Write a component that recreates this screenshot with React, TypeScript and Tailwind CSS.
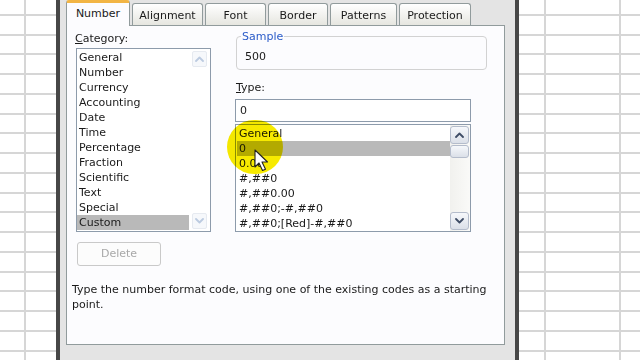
import React from "react";

const Chevron = ({ up, color }: { up?: boolean; color: string }) => (
  <svg width="9" height="6" viewBox="0 0 9 6">
    <path
      d={up ? "M1 5 L4.5 1.5 L8 5" : "M1 1 L4.5 4.5 L8 1"}
      fill="none"
      stroke={color}
      strokeWidth="1.8"
      strokeLinecap="round"
      strokeLinejoin="round"
    />
  </svg>
);

function LeftGrid() {
  return (
    <div className="flex flex-col -mt-[4px]">
      {Array.from({ length: 19 }).map((_, i) => (
        <div key={i} className="flex h-[19.75px] shrink-0 border-b-2 border-[#d6d6d6]">
          <div className="w-[26px] border-r-2 border-[#d6d6d6]" />
          <div className="flex-1" />
        </div>
      ))}
    </div>
  );
}

function RightGrid() {
  return (
    <div className="flex flex-col -mt-[4px]">
      {Array.from({ length: 19 }).map((_, i) => (
        <div key={i} className="flex h-[19.75px] shrink-0 border-b-2 border-[#d6d6d6]">
          <div className="w-[27px] border-r-2 border-[#d6d6d6]" />
          <div className="w-[75px] border-r-2 border-[#d6d6d6]" />
          <div className="flex-1" />
        </div>
      ))}
    </div>
  );
}

const categories = [
  "General",
  "Number",
  "Currency",
  "Accounting",
  "Date",
  "Time",
  "Percentage",
  "Fraction",
  "Scientific",
  "Text",
  "Special",
  "Custom",
];

const types = [
  "General",
  "0",
  "0.00",
  "#,##0",
  "#,##0.00",
  "#,##0;-#,##0",
  "#,##0;[Red]-#,##0",
];

function Tab({ label, w, active }: { label: string; w: string; active?: boolean }) {
  if (active) {
    return (
      <div
        className={`${w} relative z-10 self-start h-[26px] -mb-px bg-[#fcfcfe] border-x border-[#919b9c] border-t-[3px] border-t-[#f2b544] rounded-t-[3px] flex justify-center pt-[3px] leading-[15px]`}
      >
        {label}
      </div>
    );
  }
  return (
    <div
      className={`${w} ml-[2px] h-[22px] border border-b-0 border-[#919b9c] rounded-t-[3px] bg-linear-to-b from-white to-[#e6e6e0] flex justify-center pt-[4px] leading-[15px]`}
    >
      {label}
    </div>
  );
}

const btn =
  "w-full flex items-center justify-center rounded-[3px] border border-[#b4bccb] bg-linear-to-b from-[#f6f8fb] to-[#dbe0e8]";

export default function App() {
  return (
    <div className="relative w-[640px] h-[360px] overflow-hidden flex bg-white text-[11px] text-[#1a1a1a] font-['DejaVu_Sans',Verdana,sans-serif]">
      <div className="w-[56px] overflow-hidden">
        <LeftGrid />
      </div>
      <div className="w-[4px] bg-[#474747]" />
      <div className="w-[455px] bg-[#e4e4e4] pl-[6px] flex flex-col">
        <div className="h-[25px] flex items-end">
          <Tab label="Number" w="w-[64px]" active />
          <Tab label="Alignment" w="w-[71px]" />
          <Tab label="Font" w="w-[61px]" />
          <Tab label="Border" w="w-[60px]" />
          <Tab label="Patterns" w="w-[67px]" />
          <Tab label="Protection" w="w-[72px]" />
        </div>
        <div className="w-[439px] h-[320px] border border-[#919b9c] bg-[#fcfcfe] flex flex-col pl-[5px] pt-[4px]">
          <div className="flex">
            <div className="ml-[3px] w-[136px] flex flex-col pt-px">
              <div className="h-[15px] leading-[15px]">
                <span className="underline">C</span>ategory:
              </div>
              <div className="mt-[2px] ml-px w-[135px] h-[184px] border border-[#8d9bab] bg-white flex">
                <div className="w-[112px] pt-px">
                  {categories.map((c) => (
                    <div
                      key={c}
                      className={`h-[15px] leading-[15px] pl-[2px] ${c === "Custom" ? "bg-[#b9b9b9]" : ""}`}
                    >
                      {c}
                    </div>
                  ))}
                </div>
                <div className="flex-1 flex flex-col px-[3px] py-[2px]">
                  <div className="h-[16px] w-full flex items-center justify-center rounded-[2px] border border-[#e6eaf0] bg-[#f6f8fb]">
                    <Chevron up color="#bccbe0" />
                  </div>
                  <div className="flex-1" />
                  <div className="h-[16px] w-full flex items-center justify-center rounded-[2px] border border-[#e6eaf0] bg-[#f6f8fb]">
                    <Chevron color="#bccbe0" />
                  </div>
                </div>
              </div>
            </div>
            <div className="ml-[24px] w-[252px] flex flex-col">
              <fieldset className="ml-px w-[251px] border border-[#d2d2d2] rounded-[4px] px-[8px] pb-[5px]">
                <legend className="-ml-[4px] px-[1px] leading-[13px] text-[#2a5bc8]">Sample</legend>
                <div className="pt-[6px] leading-[15px]">500</div>
              </fieldset>
              <div className="mt-[10px] ml-px h-[15px] leading-[15px]">
                <span className="underline">T</span>ype:
              </div>
              <div className="mt-[4px] w-[236px] h-[23px] border border-[#8d9bab] bg-white pl-[4px] leading-[21px]">
                0
              </div>
              <div className="mt-[2px] w-[236px] h-[108px] border border-[#8d9bab] bg-white flex">
                <div className="flex-1 pl-px pt-px">
                  {types.map((t) => (
                    <div
                      key={t}
                      className={`h-[15px] leading-[15px] pl-[2px] ${t === "0" ? "bg-[#b9b9b9]" : ""}`}
                    >
                      {t}
                    </div>
                  ))}
                </div>
                <div className="w-[20px] flex flex-col py-px pr-px bg-linear-to-r from-[#f1f1ee] to-[#fafaf8]">
                  <div className={`${btn} h-[18px]`}>
                    <Chevron up color="#3f4d66" />
                  </div>
                  <div className={`${btn} h-[13px] mt-px`} />
                  <div className="flex-1" />
                  <div className={`${btn} h-[18px]`}>
                    <Chevron color="#3f4d66" />
                  </div>
                </div>
              </div>
            </div>
          </div>
          <div className="mt-[10px] ml-[5px] w-[84px] h-[24px] border border-[#c9c9c9] rounded-[3px] bg-[#fcfcfc] flex items-center justify-center text-[#a8a8a8]">
            Delete
          </div>
          <div className="mt-[16px] w-[430px] leading-[15px]">
            Type the number format code, using one of the existing codes as a starting point.
          </div>
        </div>
      </div>
      <div className="w-[4px] bg-[#474747]" />
      <div className="flex-1 overflow-hidden">
        <RightGrid />
      </div>

      <div className="absolute left-[227px] top-[120px] w-[56px] h-[54px] rounded-full mix-blend-multiply bg-[radial-gradient(circle,#f7ea00_0%,#f7ea00_78%,rgba(247,234,0,0)_100%)]" />
      <svg className="absolute left-[254px] top-[149px]" width="16" height="24" viewBox="0 0 16 24">
        <path
          d="M1 1 L1 18 L5 14 L8.5 21.5 L11.5 20.3 L8 13 L13.5 13 Z"
          fill="white"
          stroke="#222"
          strokeWidth="1.1"
          strokeLinejoin="round"
        />
      </svg>
    </div>
  );
}
